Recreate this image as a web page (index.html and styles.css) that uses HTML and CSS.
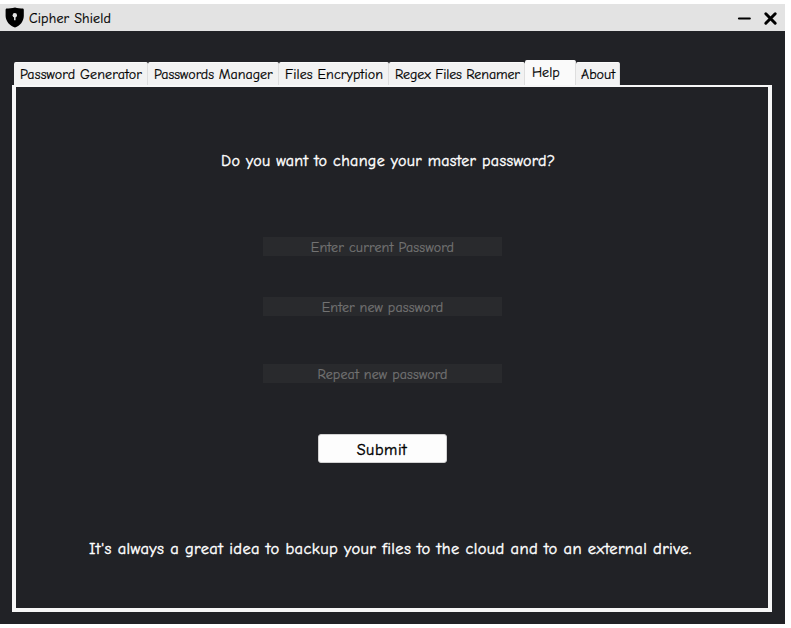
FILE: index.html
```
<!DOCTYPE html>
<html lang="en">
<head>
<meta charset="utf-8">
<title>Cipher Shield</title>
<link rel="stylesheet" href="styles.css">
</head>
<body>
<div class="window">
  <header class="titlebar">
    <svg class="shield" width="20" height="21" viewBox="0 0 20 21"><path d="M10 0.5C7 1.2 4 1.6 1.4 1.6Q0.6 1.8 0.6 3V9C0.8 14.5 4.8 18.7 10 20.5C15.2 18.7 18.6 14.5 18.8 9V3Q18.8 1.8 18 1.6C15.5 1.6 12.5 1.2 10 0.5Z"/><circle cx="9.8" cy="8.2" r="2.2" fill="#e3e3e3"/><path d="M9.8 8V13.2" stroke="#e3e3e3" stroke-width="1.5"/></svg>
    <span class="title">Cipher Shield</span>
    <svg class="controls" width="42" height="16" viewBox="0 0 42 16" fill="none" stroke="#000" stroke-linecap="round"><path d="M3 8.5H13.8" stroke-width="2.2"/><path d="M29.8 3.8L39.2 13.2M39.2 3.8L29.8 13.2" stroke-width="3"/></svg>
  </header>
  <main class="content">
    <nav class="tabs">
      <button class="tab generator"><span>Password Generator</span></button>
      <button class="tab manager"><span>Passwords Manager</span></button>
      <button class="tab encryption"><span>Files Encryption</span></button>
      <button class="tab renamer"><span>Regex Files Renamer</span></button>
      <button class="tab help active"><span>Help</span></button>
      <button class="tab about"><span>About</span></button>
    </nav>
    <section class="panel">
      <p class="question"><span>Do you want to change your master password?</span></p>
      <form class="form">
        <input class="field current" type="text" placeholder="Enter current Password">
        <input class="field new" type="text" placeholder="Enter new password">
        <input class="field repeat" type="text" placeholder="Repeat new password">
        <button class="submit" type="button"><span>Submit</span></button>
      </form>
      <p class="tip"><span>It's always a great idea to backup your files to the cloud and to an external drive.</span></p>
    </section>
  </main>
</div>
</body>
</html>
```
FILE: styles.css
```
* { box-sizing: border-box; }
body {
  margin: 0;
  padding-top: 4px;
  background: #fff;
  color: #000;
  font: 14px "Comic Sans MS", "Comic Neue", Lato, sans-serif;
  font-variant-ligatures: none;
  -webkit-text-stroke: 0.2px currentColor;
}
button, input { font: inherit; margin: 0; border: 0; padding: 0; }
p { margin: 0; }
.window { width: 785px; height: 620px; background: #212226; }
.titlebar {
  display: flex;
  align-items: center;
  height: 27px;
  padding: 0 7px 0 5px;
  background: #e3e3e3;
}
.title { margin-left: 4px; padding-top: 2px; line-height: 25px; letter-spacing: 0.17px; }
.controls { margin-left: auto; }
.content { padding: 29px 13px 12px 12px; }
.tabs { display: flex; align-items: flex-end; height: 25px; padding-left: 2px; }
.tab {
  height: 23px;
  padding: 1px 0 0 6px;
  border-right: 1px solid #dedede;
  border-top: 1px solid #fafafa;
  border-radius: 2px 2px 0 0;
  background: #f2f2f2;
  color: #000;
  text-align: left;
  white-space: nowrap;
  line-height: 20px;
}
.generator { width: 134px; letter-spacing: 0.12px; }
.manager { width: 131px; }
.encryption { width: 110px; letter-spacing: 0.12px; }
.renamer { width: 136px; letter-spacing: -0.12px; }
.help { width: 51px; }
.about { width: 44px; padding-left: 5px; }
.active { height: 25px; padding: 1px 0 1px 7px; background: #fafafa; }
.panel {
  display: flex;
  flex-direction: column;
  height: 527px;
  border: solid #f7f7f7;
  border-width: 2px 4px 4px;
}
.question, .tip {
  color: #fff;
  font-size: 16px;
  line-height: 24px;
  white-space: nowrap;
  -webkit-text-stroke-width: 0.4px;
}
.question { padding: 62px 0 0 205px; letter-spacing: 0.34px; }
.form { display: flex; flex-direction: column; width: 239px; margin: 64px 0 0 247px; }
.field {
  height: 19px;
  padding-top: 2px;
  background: #292a2d;
  color: #fff;
  text-align: center;
  letter-spacing: 0.13px;
  outline: 0;
}
.field::placeholder { color: #737373; opacity: 1; }
.current { letter-spacing: 0.18px; }
.new { margin-top: 41px; }
.repeat { margin-top: 48px; }
.submit {
  width: 129px;
  height: 29px;
  margin: 51px 0 0 55px;
  padding: 2px 1px 0 0;
  border: 1px solid #d2d2d2;
  border-radius: 3px;
  background: #fdfdfd;
  color: #000;
  font-size: 16px;
  letter-spacing: 0.6px;
  -webkit-text-stroke-width: 0.4px;
}
.tip { padding: 74px 0 0 73px; font-size: 16.5px; letter-spacing: 0.37px; }
```
